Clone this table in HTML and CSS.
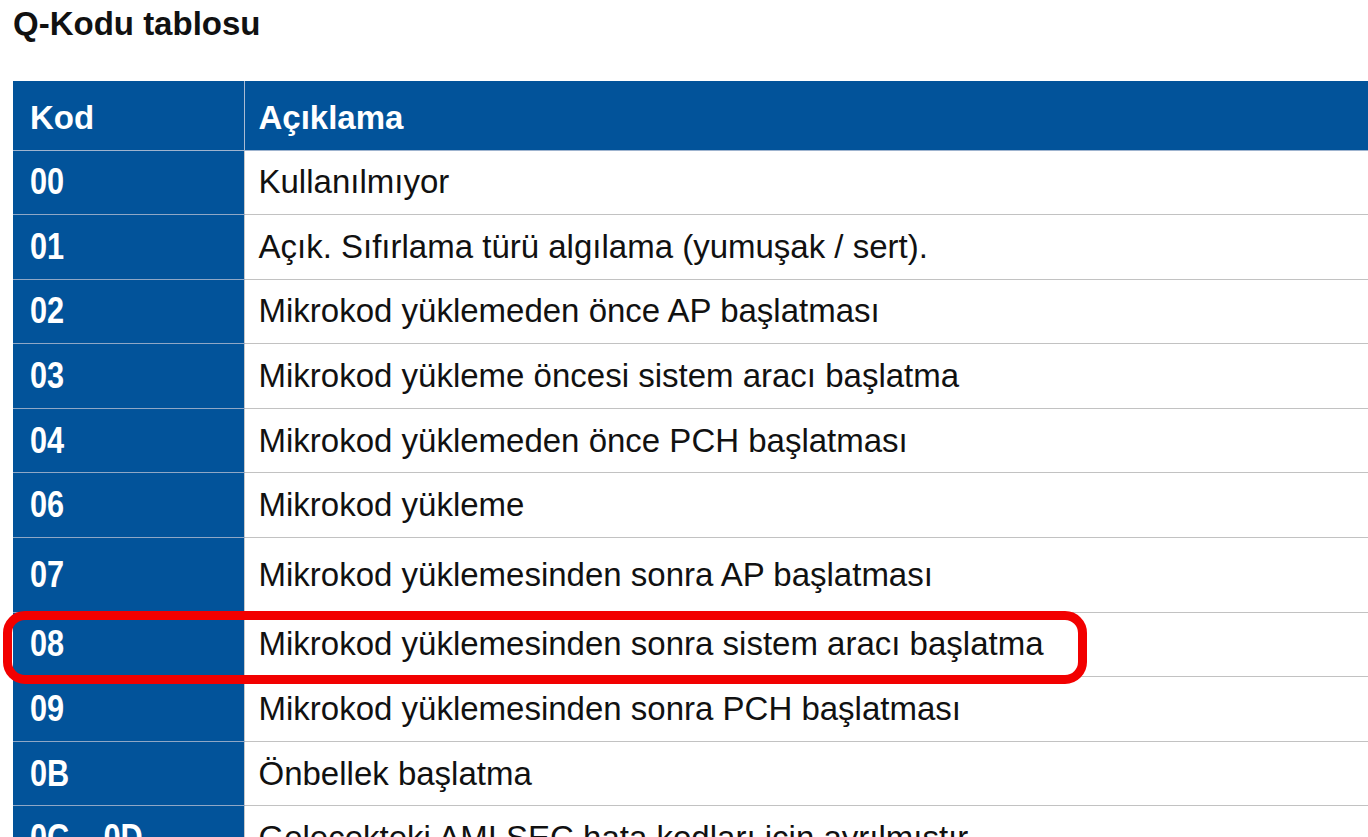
FILE: index.html
```html
<!DOCTYPE html>
<html lang="tr">
<head>
    <meta charset="UTF-8">
    <meta name="viewport" content="width=device-width, initial-scale=1.0">
    <title>Q-Kodu tablosu</title>
    <link rel="stylesheet" href="styles.css">
</head>
<body>
    <div class="page">
        <h1 class="title">Q-Kodu tablosu</h1>

        <table class="qcode-table">
            <thead>
                <tr>
                    <th class="code">Kod</th>
                    <th class="desc">Açıklama</th>
                </tr>
            </thead>
            <tbody>
                <tr><td class="code"><span class="num">00</span></td><td class="desc">Kullanılmıyor</td></tr>
                <tr><td class="code"><span class="num">01</span></td><td class="desc">Açık. Sıfırlama türü algılama (yumuşak / sert).</td></tr>
                <tr><td class="code"><span class="num">02</span></td><td class="desc">Mikrokod yüklemeden önce AP başlatması</td></tr>
                <tr><td class="code"><span class="num">03</span></td><td class="desc">Mikrokod yükleme öncesi sistem aracı başlatma</td></tr>
                <tr><td class="code"><span class="num">04</span></td><td class="desc">Mikrokod yüklemeden önce PCH başlatması</td></tr>
                <tr><td class="code"><span class="num">06</span></td><td class="desc">Mikrokod yükleme</td></tr>
                <tr class="tall"><td class="code"><span class="num">07</span></td><td class="desc">Mikrokod yüklemesinden sonra AP başlatması</td></tr>
                <tr class="highlight"><td class="code"><span class="num">08</span></td><td class="desc">Mikrokod yüklemesinden sonra sistem aracı başlatma</td></tr>
                <tr><td class="code"><span class="num">09</span></td><td class="desc">Mikrokod yüklemesinden sonra PCH başlatması</td></tr>
                <tr><td class="code"><span class="num">0B</span></td><td class="desc">Önbellek başlatma</td></tr>
                <tr><td class="code"><span class="num">0C – 0D</span></td><td class="desc">Gelecekteki AMI SEC hata kodları için ayrılmıştır</td></tr>
            </tbody>
        </table>
    </div>
</body>
</html>
```

FILE: styles.css
```css
* {
    margin: 0;
    padding: 0;
    box-sizing: border-box;
}

html, body {
    width: 1368px;
    height: 837px;
    overflow: hidden;
}

body {
    font-family: 'Liberation Sans', Arial, sans-serif;
    background: #fff;
    color: #111;
}

.page {
    padding: 7px 0 0 13px;
}

.title {
    font-size: 33px;
    font-weight: bold;
    line-height: 34px;
    color: #111;
    margin-bottom: 40px;
}

.qcode-table {
    width: 1420px;
    border-collapse: collapse;
    table-layout: fixed;
}

.qcode-table th,
.qcode-table td {
    height: 64.6px;
    padding: 0;
    text-align: left;
    vertical-align: middle;
}

.qcode-table thead th {
    height: 69px;
    background: #02539a;
    color: #fff;
    font-size: 33px;
    font-weight: bold;
    border-bottom: 1px solid #9fb4cf;
    padding-top: 6px;
}

.qcode-table .code {
    width: 231px;
    padding-left: 17px;
}

.qcode-table th.desc {
    padding-left: 14px;
    border-left: 1px solid #a9bbd3;
}

.qcode-table td.code {
    background: #02539a;
    color: #fff;
    font-size: 37px;
    font-weight: bold;
    border-bottom: 1px solid #8fa7c6;
}

/* dar (narrow) rakamlar */
.num {
    display: inline-block;
    white-space: nowrap;
    transform: scaleX(0.83);
    transform-origin: left center;
}

.qcode-table td.desc {
    padding-left: 14px;
    font-size: 33px;
    color: #111;
    border-bottom: 1px solid #c2c2c2;
    border-left: 1px solid #c8c8c8;
}

.qcode-table tr.tall td {
    height: 74.5px;
}

.qcode-table tr.highlight td.code {
    position: relative;
}

.qcode-table tr.highlight td.code::after {
    content: "";
    box-sizing: border-box;
    position: absolute;
    left: -10px;
    top: -2px;
    width: 1084px;
    height: 73px;
    border: 9px solid #f20000;
    border-radius: 22px;
    z-index: 2;
}
```
